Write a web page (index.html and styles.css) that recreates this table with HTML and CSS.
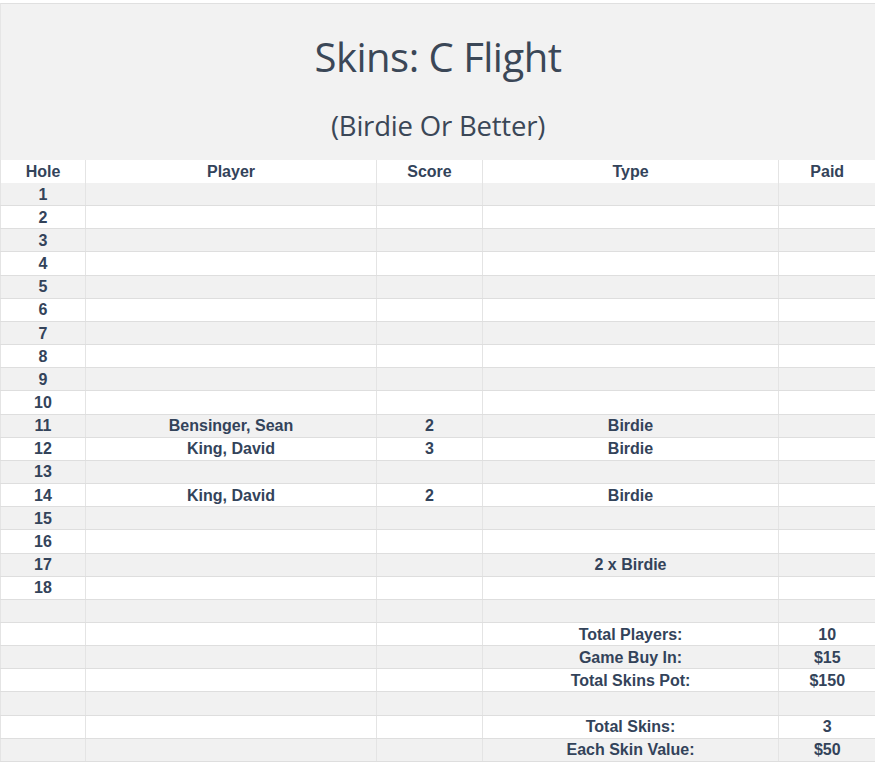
FILE: index.html
```html
<!DOCTYPE html>
<html>
<head>
<meta charset="utf-8">
<link rel="stylesheet" href="styles.css">
</head>
<body>
<div class="page">
  <header class="banner">
    <h1 class="title">Skins: C Flight</h1>
    <h2 class="subtitle">(Birdie Or Better)</h2>
  </header>
  <table class="skins">
    <colgroup>
      <col class="c-hole"><col class="c-player"><col class="c-score"><col class="c-type"><col class="c-paid">
    </colgroup>
    <thead>
      <tr><th>Hole</th><th>Player</th><th>Score</th><th>Type</th><th>Paid</th></tr>
    </thead>
    <tbody>
      <tr><td>1</td><td></td><td></td><td></td><td></td></tr>
      <tr><td>2</td><td></td><td></td><td></td><td></td></tr>
      <tr><td>3</td><td></td><td></td><td></td><td></td></tr>
      <tr><td>4</td><td></td><td></td><td></td><td></td></tr>
      <tr><td>5</td><td></td><td></td><td></td><td></td></tr>
      <tr><td>6</td><td></td><td></td><td></td><td></td></tr>
      <tr><td>7</td><td></td><td></td><td></td><td></td></tr>
      <tr><td>8</td><td></td><td></td><td></td><td></td></tr>
      <tr><td>9</td><td></td><td></td><td></td><td></td></tr>
      <tr><td>10</td><td></td><td></td><td></td><td></td></tr>
      <tr><td>11</td><td>Bensinger, Sean</td><td>2</td><td>Birdie</td><td></td></tr>
      <tr><td>12</td><td>King, David</td><td>3</td><td>Birdie</td><td></td></tr>
      <tr><td>13</td><td></td><td></td><td></td><td></td></tr>
      <tr><td>14</td><td>King, David</td><td>2</td><td>Birdie</td><td></td></tr>
      <tr><td>15</td><td></td><td></td><td></td><td></td></tr>
      <tr><td>16</td><td></td><td></td><td></td><td></td></tr>
      <tr><td>17</td><td></td><td></td><td>2 x Birdie</td><td></td></tr>
      <tr><td>18</td><td></td><td></td><td></td><td></td></tr>
      <tr><td></td><td></td><td></td><td></td><td></td></tr>
      <tr><td></td><td></td><td></td><td>Total Players:</td><td>10</td></tr>
      <tr><td></td><td></td><td></td><td>Game Buy In:</td><td>$15</td></tr>
      <tr><td></td><td></td><td></td><td>Total Skins Pot:</td><td>$150</td></tr>
      <tr><td></td><td></td><td></td><td></td><td></td></tr>
      <tr><td></td><td></td><td></td><td>Total Skins:</td><td>3</td></tr>
      <tr><td></td><td></td><td></td><td>Each Skin Value:</td><td>$50</td></tr>
    </tbody>
  </table>
</div>
</body>
</html>
```

FILE: styles.css
```css
html, body {
  margin: 0;
  padding: 0;
  background: #ffffff;
}

.page {
  padding-top: 3px;
  width: 875px;
  overflow: hidden;
}

.banner {
  background: #f2f2f2;
  border-top: 1px solid #e0e0e0;
  border-left: 1px solid #e6e6e6;
  height: 157px;
  box-sizing: border-box;
  text-align: center;
  color: #3b4757;
  font-family: "Open Sans", "Noto Sans", sans-serif;
  padding-top: 29px;
}

.title {
  margin: 0;
  font-size: 40px;
  font-weight: 400;
  line-height: 48px;
  letter-spacing: -0.5px;
}

.subtitle {
  margin: 28px 0 0 0;
  font-size: 27.5px;
  font-weight: 400;
  line-height: 34px;
  letter-spacing: -0.2px;
}

.skins {
  width: 875px;
  border-collapse: collapse;
  table-layout: fixed;
  font-family: "Liberation Sans", Arial, sans-serif;
  font-weight: 700;
  font-size: 16px;
  color: #33435a;
}

.c-hole { width: 85px; }
.c-player { width: 291px; }
.c-score { width: 106px; }
.c-type { width: 296px; }
.c-paid { width: 97px; }

.skins th,
.skins td {
  text-align: center;
  padding: 0;
  border-left: 1px solid #e4e4e4;
  line-height: 18px;
}

.skins th {
  height: 22px;
  font-weight: 700;
  background: #ffffff;
  padding-top: 1px;
}

.skins td {
  height: 21.17px;
  padding-top: 1px;
  border-bottom: 1px solid #dedede;
}

.skins tbody tr:nth-child(odd) td {
  background: #f1f1f1;
}

.skins tbody tr:nth-child(even) td {
  background: #ffffff;
}
```
